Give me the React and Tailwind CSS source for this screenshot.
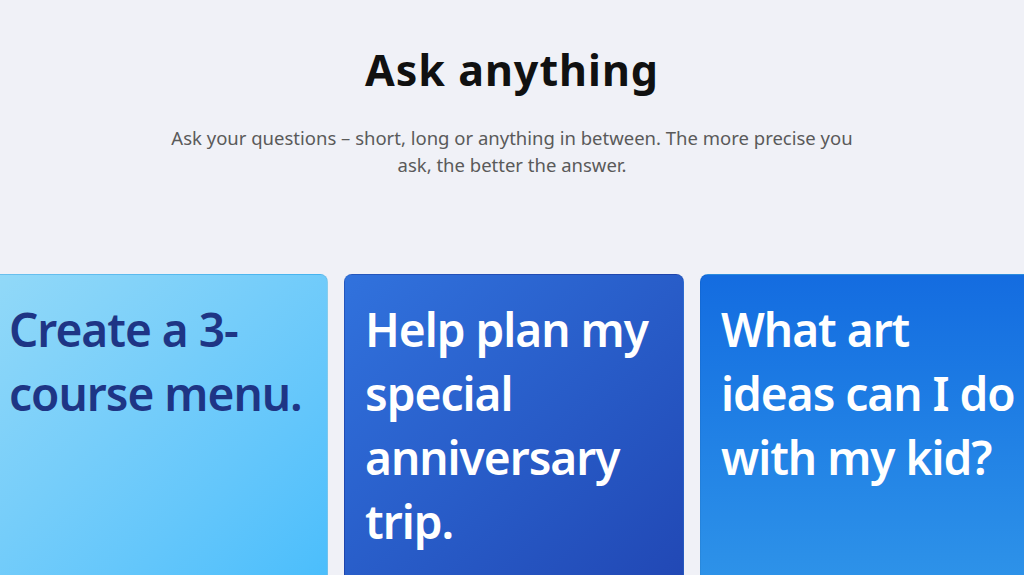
import React from "react";

const cards = [
  {
    text: "Create a 3-course menu.",
    className: "bg-gradient-to-br from-[#92d9f8] to-[#48bdfc] text-[#1e3585]",
  },
  {
    text: "Help plan my special anniversary trip.",
    className: "bg-gradient-to-br from-[#3172dd] to-[#2147b4] text-white",
  },
  {
    text: "What art ideas can I do with my kid?",
    className: "bg-gradient-to-b from-[#146ce0] to-[#2f94e9] text-white",
  },
];

const App = () => {
  return (
    <div
      className="w-full h-[575px] overflow-hidden bg-[#f0f1f7]"
      style={{ fontFamily: '"Noto Sans", "Open Sans", sans-serif' }}
    >
      <div className="flex flex-col items-center pt-[46px]">
        <h1 className="text-[43px] leading-[48px] font-bold tracking-[1px] text-[#111]">Ask anything</h1>
        <p className="mt-[30px] max-w-[700px] text-center text-[18.5px] leading-[27px] text-[#5a5a5a]">
          Ask your questions – short, long or anything in between. The more precise you
          ask, the better the answer.
        </p>
      </div>

      <div className="mt-[96px] flex justify-center gap-4 pl-[4px]">
        {cards.map((card, idx) => (
          <div
            key={idx}
            className={`w-[340px] h-[320px] shrink-0 rounded-lg border border-black/5 px-5 pt-[22px] ${card.className}`}
          >
            <p className="text-[46px] leading-[64px] font-semibold tracking-[-1px]">{card.text}</p>
          </div>
        ))}
      </div>
    </div>
  );
};

export default App;
